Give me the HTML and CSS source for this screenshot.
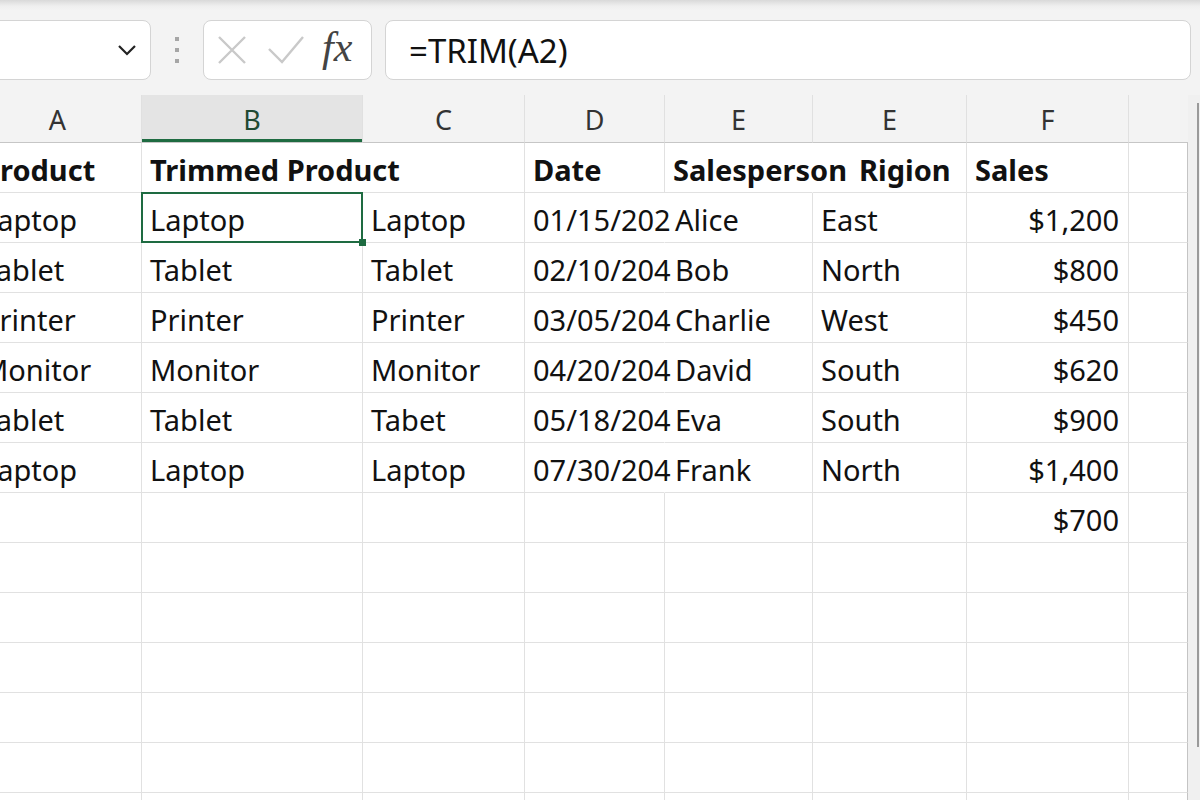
FILE: index.html
```html
<!DOCTYPE html>
<html lang="en">
<head>
  <meta charset="UTF-8" />
  <title>Sheet – TRIM</title>
  <link rel="stylesheet" href="styles.css">
</head>
<body>

  <div class="topbar">
    <div class="namebox">
      <svg class="chev" width="20" height="12" viewBox="0 0 20 12"><path d="M2 2 L10 10 L18 2" fill="none" stroke="#222" stroke-width="2.2"/></svg>
    </div>
    <div class="grip"><span></span><span></span><span></span></div>
    <div class="fxbox">
      <svg width="32" height="32" viewBox="0 0 32 32"><path d="M3 3 L29 29 M29 3 L3 29" stroke="#c9c9c9" stroke-width="2.4" fill="none"/></svg>
      <svg width="38" height="30" viewBox="0 0 38 30"><path d="M2 14 L15 27 L36 2" stroke="#c9c9c9" stroke-width="2.4" fill="none"/></svg>
      <span class="fx">fx</span>
    </div>
    <div class="formula">=TRIM(A2)</div>
  </div>

  <div class="sheet">
    <div class="grid">
      <div class="colhead">A</div>
      <div class="colhead active">B</div>
      <div class="colhead">C</div>
      <div class="colhead">D</div>
      <div class="colhead">E</div>
      <div class="colhead">E</div>
      <div class="colhead">F</div>
      <div class="colhead"></div>

      <div class="cell bold">Product</div>
      <div class="cell bold nb">Trimmed Product</div>
      <div class="cell"></div>
      <div class="cell bold">Date</div>
      <div class="cell bold nb">Salesperson</div>
      <div class="cell bold indent">Rigion</div>
      <div class="cell bold">Sales</div>
      <div class="cell last"></div>

      <div class="cell">Laptop</div>
      <div class="cell selected">Laptop</div>
      <div class="cell">Laptop</div>
      <div class="cell nb">01/15/202</div>
      <div class="cell name">Alice</div>
      <div class="cell">East</div>
      <div class="cell num">$1,200</div>
      <div class="cell last"></div>

      <div class="cell">Tablet</div>
      <div class="cell">Tablet</div>
      <div class="cell">Tablet</div>
      <div class="cell nb">02/10/204</div>
      <div class="cell name">Bob</div>
      <div class="cell">North</div>
      <div class="cell num">$800</div>
      <div class="cell last"></div>

      <div class="cell">Printer</div>
      <div class="cell">Printer</div>
      <div class="cell">Printer</div>
      <div class="cell nb">03/05/204</div>
      <div class="cell name">Charlie</div>
      <div class="cell">West</div>
      <div class="cell num">$450</div>
      <div class="cell last"></div>

      <div class="cell">Monitor</div>
      <div class="cell">Monitor</div>
      <div class="cell">Monitor</div>
      <div class="cell nb">04/20/204</div>
      <div class="cell name">David</div>
      <div class="cell">South</div>
      <div class="cell num">$620</div>
      <div class="cell last"></div>

      <div class="cell">Tablet</div>
      <div class="cell">Tablet</div>
      <div class="cell">Tabet</div>
      <div class="cell nb">05/18/204</div>
      <div class="cell name">Eva</div>
      <div class="cell">South</div>
      <div class="cell num">$900</div>
      <div class="cell last"></div>

      <div class="cell">Laptop</div>
      <div class="cell">Laptop</div>
      <div class="cell">Laptop</div>
      <div class="cell nb">07/30/204</div>
      <div class="cell name">Frank</div>
      <div class="cell">North</div>
      <div class="cell num">$1,400</div>
      <div class="cell last"></div>

      <div class="cell"></div><div class="cell"></div><div class="cell"></div><div class="cell"></div>
      <div class="cell"></div><div class="cell"></div><div class="cell num">$700</div><div class="cell last"></div>

      <div class="cell"></div><div class="cell"></div><div class="cell"></div><div class="cell"></div>
      <div class="cell"></div><div class="cell"></div><div class="cell"></div><div class="cell last"></div>
      <div class="cell"></div><div class="cell"></div><div class="cell"></div><div class="cell"></div>
      <div class="cell"></div><div class="cell"></div><div class="cell"></div><div class="cell last"></div>
      <div class="cell"></div><div class="cell"></div><div class="cell"></div><div class="cell"></div>
      <div class="cell"></div><div class="cell"></div><div class="cell"></div><div class="cell last"></div>
      <div class="cell"></div><div class="cell"></div><div class="cell"></div><div class="cell"></div>
      <div class="cell"></div><div class="cell"></div><div class="cell"></div><div class="cell last"></div>
      <div class="cell"></div><div class="cell"></div><div class="cell"></div><div class="cell"></div>
      <div class="cell"></div><div class="cell"></div><div class="cell"></div><div class="cell last"></div>
      <div class="cell"></div><div class="cell"></div><div class="cell"></div><div class="cell"></div>
      <div class="cell"></div><div class="cell"></div><div class="cell"></div><div class="cell last"></div>
    </div>
    <div class="vscroll"><div class="thumb"></div></div>
  </div>

</body>
</html>
```

FILE: styles.css
```css
html, body {
  margin: 0;
  height: 100%;
  overflow: hidden;
}
body {
  background: #f3f3f3;
  font-family: 'Noto Sans', 'Open Sans', sans-serif;
  color: #111;
}

/* formula bar */
.topbar {
  height: 95px;
  box-sizing: border-box;
  padding-top: 20px;
  display: flex;
  align-items: flex-start;
  background: linear-gradient(#d9d9d9 0, #efefef 6px, #f3f3f3 10px);
}
.namebox, .fxbox, .formula {
  height: 60px;
  box-sizing: border-box;
  background: #fff;
  border: 1px solid #d4d4d4;
  border-radius: 8px;
  display: flex;
  align-items: center;
}
.namebox {
  width: 162px;
  margin-left: -11px;
  justify-content: flex-end;
  padding-right: 13px;
}
.grip {
  width: 52px;
  height: 60px;
  display: flex;
  flex-direction: column;
  align-items: center;
  justify-content: center;
  gap: 7px;
}
.grip span {
  width: 4px;
  height: 4px;
  background: #a6a6a6;
}
.fxbox {
  width: 169px;
  padding-left: 12px;
  gap: 19px;
}
.fxbox .fx {
  font-family: 'Liberation Serif', serif;
  font-style: italic;
  font-size: 42px;
  color: #444;
  margin-left: -2px;
  margin-top: -6px;
}
.formula {
  width: 806px;
  margin-left: 13px;
  padding-left: 23px;
  font-size: 33px;
}

/* sheet */
.sheet {
  display: flex;
}
.grid {
  margin-left: -26px;
  width: 1214px;
  display: grid;
  grid-template-columns: 168px 221px 162px 140px 148px 154px 162px 59px;
  grid-template-rows: 48px;
  grid-auto-rows: 50px;
  background: #fff;
}
.colhead {
  background: #f3f3f3;
  border-right: 1px solid #e0e0e0;
  border-bottom: 1px solid #c6c6c6;
  display: flex;
  align-items: center;
  justify-content: center;
  font-size: 27px;
  color: #333;
  padding-top: 2px;
}
.colhead.active {
  background: #e4e4e4;
  box-shadow: inset 0 -3px 0 #1e6b41;
  color: #1f4a33;
}
.colhead:nth-child(8) {
  border-right: none;
}
.cell {
  border-right: 1px solid #e1e1e1;
  border-bottom: 1px solid #e1e1e1;
  display: flex;
  align-items: center;
  padding-left: 8px;
  padding-top: 3px;
  font-size: 29px;
  white-space: nowrap;
  position: relative;
}
.cell.bold {
  font-weight: 700;
}
.cell.nb {
  border-right-color: #fff;
}
.cell.name {
  padding-left: 10px;
}
.cell.indent {
  padding-left: 46px;
}
.cell.num {
  justify-content: flex-end;
  padding-right: 9px;
}
.cell.last {
  border-right: 1px solid #c4c4c4;
}
.cell.selected::after {
  content: '';
  position: absolute;
  left: -1px;
  top: -1px;
  right: -1px;
  bottom: -1px;
  border: 2px solid #1e6b41;
}
.cell.selected::before {
  content: '';
  position: absolute;
  right: -4px;
  bottom: -4px;
  width: 7px;
  height: 7px;
  background: #1e6b41;
  z-index: 1;
}
.vscroll {
  width: 12px;
  background: #f0f0f0;
}
.thumb {
  margin: 8px 0 0 9px;
  width: 2px;
  height: 644px;
  background: #9a9a9a;
}
```
